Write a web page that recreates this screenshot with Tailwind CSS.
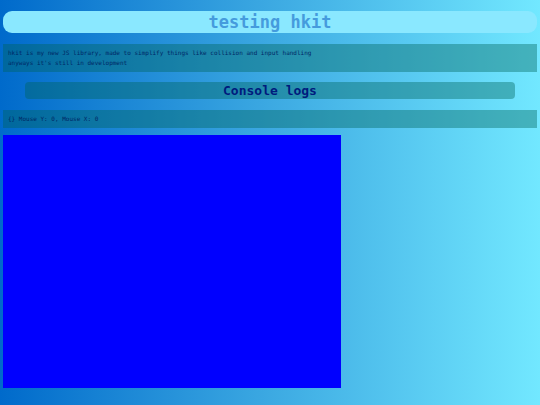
<!DOCTYPE html>
<html lang="en">
<head>
    <meta charset="UTF-8">
    <meta name="viewport" content="width=device-width, initial-scale=1.0">
    <title>testing hkit</title>
    <script src="https://cdn.jsdelivr.net/npm/@tailwindcss/browser@4"></script>
</head>
<body class="min-h-screen bg-linear-to-r/srgb from-[#006acb] via-[#3ca9e2] to-[#72e8ff] px-[3px] pt-[11px] font-['DejaVu_Sans_Mono',monospace] text-[#002865]">
    <!-- Title -->
    <h1 class="mb-[11px] rounded-[9px] bg-[#8ae8ff] text-center text-[17px] leading-[22px] font-bold text-[#459bdd]">testing hkit</h1>

    <p class="mb-[10px] bg-[#00645a]/40 px-[5px] py-1 text-[6px] leading-[10px]">
        hkit is my new JS library, made to simplify things like collision and input handling<br>
        anyways it's still in development
    </p>

    <!-- Logs -->
    <h2 class="mx-[22px] mb-[11px] rounded bg-[#00645a]/40 text-center text-[13px] leading-[17px] font-bold text-[#001b7d]">Console logs</h2>
    <p id="logs" class="mb-[7px] bg-[#00645a]/40 px-[5px] py-1 text-[6px] leading-[10px]">{} Mouse Y: 0, Mouse X: 0</p>

    <canvas id="game" width="338" height="253" class="bg-[#0000ff]"></canvas>

    <script>
        const logs = document.getElementById('logs');
        const game = document.getElementById('game');

        game.addEventListener('mousemove', function (e) {
            logs.innerText = `{} Mouse Y: ${e.offsetY}, Mouse X: ${e.offsetX}`;
        });
    </script>
</body>
</html>
